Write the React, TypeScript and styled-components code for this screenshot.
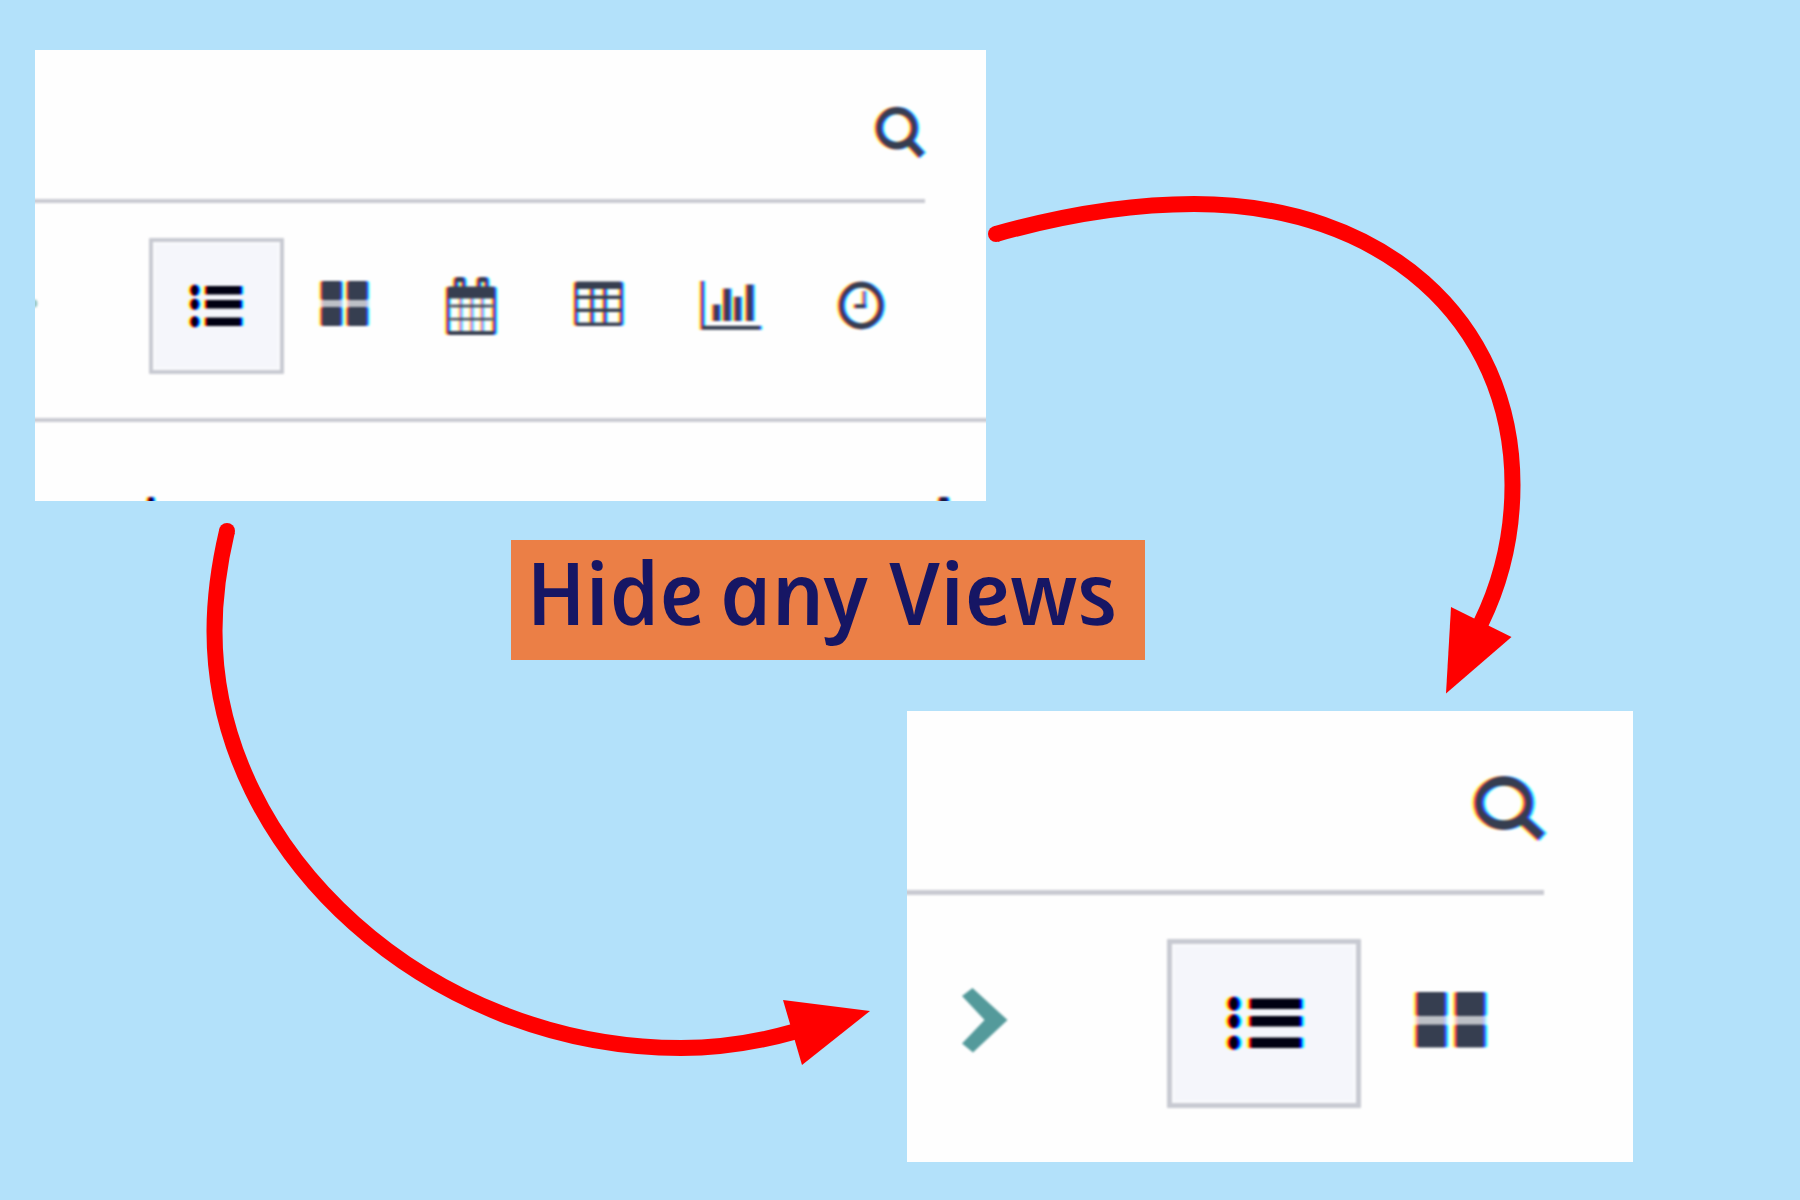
import React from "react";
import styled, { createGlobalStyle } from "styled-components";

const Global = createGlobalStyle`
  html, body { margin: 0; padding: 0; background: #b3e1fa; }
`;

const Canvas = styled.main`
  position: relative;
  box-sizing: border-box;
  width: 1800px;
  height: 1200px;
  padding-top: 50px;
  overflow: hidden;
  background: #b3e1fa;
  display: flex;
  flex-direction: column;
  align-items: flex-start;
`;

const Panel = styled.section<{ $w: number; $left: number; $top?: number }>`
  width: ${(p) => p.$w}px;
  height: 451px;
  margin-left: ${(p) => p.$left}px;
  margin-top: ${(p) => p.$top ?? 0}px;
  background: #fefefe;
  overflow: hidden;
  display: flex;
  flex-direction: column;
  flex: none;
`;

const SearchRow = styled.div<{ $h: number; $right: number }>`
  box-sizing: border-box;
  height: ${(p) => p.$h}px;
  margin-right: ${(p) => p.$right}px;
  display: flex;
  justify-content: flex-end;
  flex: none;
`;

const Rule = styled.div<{ $h: number; $right?: number }>`
  height: ${(p) => p.$h}px;
  margin-right: ${(p) => p.$right ?? 0}px;
  margin-left: -4px;
  background: #c9cad2;
  filter: blur(0.9px);
  flex: none;
`;

const ViewRow = styled.div<{ $h: number; $pad: number }>`
  box-sizing: border-box;
  height: ${(p) => p.$h}px;
  padding-top: ${(p) => p.$pad}px;
  display: flex;
  align-items: flex-start;
  flex: none;
`;

const ActiveView = styled.div<{ $w: number; $h: number; $b: number; $left: number }>`
  box-sizing: border-box;
  width: ${(p) => p.$w}px;
  height: ${(p) => p.$h}px;
  margin-left: ${(p) => p.$left}px;
  flex: none;
  border-radius: 1px;
  background: #f5f6fb;
  box-shadow: inset 0 0 0 ${(p) => p.$b}px #c8cad2, inset 0 0 2px ${(p) => p.$b + 2}px #fafbfd;
  filter: blur(0.8px);
`;

const ActiveSlot = styled.div<{ $w: number }>`
  display: grid;
  flex: none;
  width: ${(p) => p.$w}px;
  > * { grid-area: 1 / 1; }
`;

const Glyph = styled.svg<{ $l?: number; $t?: number }>`
  display: block;
  flex: none;
  overflow: visible;
  isolation: isolate;
  margin-left: ${(p) => p.$l ?? 0}px;
  margin-top: ${(p) => p.$t ?? 0}px;
  filter: blur(1.05px);
  g { mix-blend-mode: multiply; }
`;

const Title = styled.h1`
  box-sizing: border-box;
  margin: 39px 0 0 511px;
  width: 634px;
  height: 120px;
  padding-left: 20px;
  background: #eb7f46;
  color: #161664;
  font: italic 600 87px/102px "Open Sans", "Noto Sans", sans-serif;
  display: flex;
  white-space: nowrap;
  flex: none;
`;

const Word = styled.span<{ $w: number; $sx: number }>`
  display: block;
  width: ${(p) => p.$w}px;
  height: 102px;
  transform: skewX(12deg) scaleX(${(p) => p.$sx});
  transform-origin: 0 83px;
`;

const Arrows = styled.svg`
  position: absolute;
  inset: 0;
  pointer-events: none;
`;

type Box = { x: number; y: number; w: number; h: number };
type IconProps = {
  box: Box;
  ink?: [number, number, number];
  shift?: number;
  l?: number;
  t?: number;
  children: React.ReactNode;
};

/* Paints the shape once per colour channel with a small horizontal offset. */
function Icon({ box, ink = [54, 62, 80], shift = 1.8, l, t, children }: IconProps) {
  const [r, g, b] = ink;
  const layers: [string, number][] = [
    [`rgb(255,255,${b})`, -shift],
    [`rgb(255,${g},255)`, 0],
    [`rgb(${r},255,255)`, shift],
  ];
  return (
    <Glyph
      width={box.w}
      height={box.h}
      viewBox={`${box.x} ${box.y} ${box.w} ${box.h}`}
      $l={l}
      $t={t}
    >
      {layers.map(([color, dx], i) => (
        <g key={i} color={color} fill={color} transform={`translate(${dx} 0)`}>
          {children}
        </g>
      ))}
    </Glyph>
  );
}

const BLACK: [number, number, number] = [0, 0, 18];

export default function App() {
  return (
    <>
      <Global />
      <Canvas>
        <Panel $w={951} $left={35}>
          <SearchRow $h={149} $right={61}>
            <Icon box={{ x: 873, y: 104, w: 52, h: 58 }} t={54}>
              <circle cx="896.6" cy="128.1" r="17.6" fill="none" stroke="currentColor" strokeWidth="7.6" />
              <path d="M908 140.5L921.8 155.3" stroke="currentColor" strokeWidth="8.4" />
            </Icon>
          </SearchRow>
          <Rule $h={4} $right={61} />
          <ViewRow $h={215} $pad={35}>
            <Icon box={{ x: 35, y: 298, w: 4, h: 12 }} t={60} ink={[150, 200, 200]} shift={0}>
              <ellipse cx="34.5" cy="303.5" rx="3" ry="4" />
            </Icon>
            <ActiveSlot $w={245}>
              <ActiveView $w={135} $h={136} $b={4} $left={110} />
              <Icon box={{ x: 186, y: 280, w: 60, h: 50 }} ink={BLACK} l={147} t={42}>
                {[290.3, 304.3, 321.7].map((y) => (
                  <React.Fragment key={y}>
                    <ellipse cx="194.5" cy={y} rx="4.7" ry="5.7" />
                    <rect x="205" y={y - 4.2} width="37" height="8.4" rx="1" />
                  </React.Fragment>
                ))}
              </Icon>
            </ActiveSlot>
            <Icon box={{ x: 318, y: 278, w: 54, h: 50 }} l={34} t={40}>
              <rect x="320.5" y="281" width="21.5" height="19" rx="2" />
              <rect x="346.5" y="281" width="21.5" height="19" rx="2" />
              <rect x="320.5" y="307" width="21.5" height="19" rx="2" />
              <rect x="346.5" y="307" width="21.5" height="19" rx="2" />
              <rect x="321" y="300" width="21" height="7" opacity=".33" />
              <rect x="347" y="300" width="21" height="7" opacity=".33" />
            </Icon>
            <Icon box={{ x: 443, y: 276, w: 56, h: 62 }} l={71} t={38}>
              <path
                fillRule="evenodd"
                d="M449 286.5H493Q496 286.5 496 289.5V332Q496 335 493 335H449Q446 335 446 332V289.5Q446 286.5 449 286.5ZM449.5 298.5V331H492.5V298.5Z"
              />
              <path
                fillRule="evenodd"
                d="M457 277H462Q465.5 277 465.5 281V293H453.5V281Q453.5 277 457 277ZM457.8 282V291.5H461.4V282Z"
              />
              <path
                fillRule="evenodd"
                d="M480 277H485Q488.5 277 488.5 281V293H476.5V281Q476.5 277 480 277ZM480.8 282V291.5H484.4V282Z"
              />
              <path d="M450 306H492M450 319.2H492" stroke="currentColor" strokeWidth="2.8" opacity=".85" />
              <path d="M460.5 298V332M471.5 298V332M482 298V332" stroke="currentColor" strokeWidth="2.4" opacity=".7" />
            </Icon>
            <Icon box={{ x: 571, y: 279, w: 56, h: 50 }} l={72} t={41}>
              <path
                fillRule="evenodd"
                d="M577 281.5H620Q623 281.5 623 284.5V323Q623 326 620 326H577Q574 326 574 323V284.5Q574 281.5 577 281.5ZM577.5 289V322.5H619.5V289Z"
              />
              <path d="M577 297.3H620M577 310.3H620" stroke="currentColor" strokeWidth="3.6" />
              <path d="M591.7 288V323M604.7 288V323" stroke="currentColor" strokeWidth="3.6" />
            </Icon>
            <Icon box={{ x: 698, y: 278, w: 68, h: 54 }} l={71} t={40}>
              <path d="M700.5 281H704V325.8H761V329.7H700.5Z" />
              <rect x="712.5" y="304.5" width="7.5" height="16.5" />
              <rect x="723" y="288.5" width="7.8" height="32.5" />
              <rect x="734" y="296.7" width="7.2" height="24.3" />
              <rect x="745.8" y="284.5" width="7.8" height="36.5" />
            </Icon>
            <Icon box={{ x: 835, y: 279, w: 52, h: 54 }} l={69} t={41}>
              <ellipse cx="861" cy="305.5" rx="19.8" ry="20.8" fill="none" stroke="currentColor" strokeWidth="6.2" />
              <path d="M864 291V306" stroke="currentColor" strokeWidth="3.8" opacity=".75" />
              <path d="M854 306.2H866" stroke="currentColor" strokeWidth="4" />
            </Icon>
          </ViewRow>
          <Rule $h={4} $right={-4} />
          <ViewRow $h={79} $pad={74}>
            <Icon box={{ x: 145, y: 496, w: 12, h: 6 }} l={110} ink={BLACK}>
              <rect x="147.5" y="497" width="6.5" height="10" rx="2" />
            </Icon>
            <Icon box={{ x: 936, y: 496, w: 15, h: 6 }} l={779} ink={[20, 28, 60]}>
              <rect x="938.5" y="497" width="10" height="10" rx="2" />
            </Icon>
          </ViewRow>
        </Panel>

        <Title>
          <Word $w={193} $sx={0.985}>Hide</Word>
          <Word $w={170} $sx={1.03}>any</Word>
          <Word $w={222} $sx={1.018}>Views</Word>
        </Title>

        <Panel $w={726} $left={907} $top={51}>
          <SearchRow $h={179} $right={87}>
            <Icon box={{ x: 1470, y: 774, w: 76, h: 70 }} t={63} shift={2.3}>
              <ellipse cx="1503.5" cy="803" rx="24.9" ry="22.2" fill="none" stroke="currentColor" strokeWidth="9.8" />
              <path d="M1521 818L1541.5 837" stroke="currentColor" strokeWidth="10.6" />
            </Icon>
          </SearchRow>
          <Rule $h={5} $right={89} />
          <ViewRow $h={267} $pad={44}>
            <Icon box={{ x: 960, y: 986, w: 50, h: 70 }} l={53} t={47} ink={[84, 154, 155]} shift={0}>
              <path d="M962 996L972.5 988L1007.5 1020L973 1052.5L962 1043.5L984.5 1020Z" />
            </Icon>
            <ActiveSlot $w={351}>
              <ActiveView $w={194} $h={169} $b={5} $left={157} />
              <Icon box={{ x: 1222, y: 990, w: 86, h: 66 }} l={212} t={51} ink={BLACK} shift={2.4}>
                {[1003.7, 1021.3, 1042.7].map((y) => (
                  <React.Fragment key={y}>
                    <ellipse cx="1233.7" cy={y} rx="6.2" ry="7.2" />
                    <rect x="1249" y={y - 5.2} width="53" height="10.4" rx="1.5" />
                  </React.Fragment>
                ))}
              </Icon>
            </ActiveSlot>
            <Icon box={{ x: 1411, y: 988, w: 78, h: 62 }} l={50} t={49} shift={2.3}>
              <rect x="1415.5" y="992" width="31" height="24" rx="2" />
              <rect x="1454.5" y="992" width="31" height="24" rx="2" />
              <rect x="1415.5" y="1024.5" width="31" height="23" rx="2" />
              <rect x="1454.5" y="1024.5" width="31" height="23" rx="2" />
              <rect x="1416" y="1016" width="30" height="8.5" opacity=".33" />
              <rect x="1455" y="1016" width="30" height="8.5" opacity=".33" />
            </Icon>
          </ViewRow>
        </Panel>

        <Arrows width="1800" height="1200" viewBox="0 0 1800 1200">
          <g fill="none" stroke="#ff0000" strokeWidth="16">
            <path d="M996 234C1062 215.5 1132 204 1194 204C1382 204 1512.5 319 1512.5 485C1512.5 535 1502 580 1481 623" />
            <path d="M227 531C219 565 214.5 598 214.5 631C214.5 854 431 1048 681 1048C722 1048 758 1042 795 1031.5" />
          </g>
          <g fill="#ff0000">
            <circle cx="996" cy="234" r="8" />
            <circle cx="227" cy="531" r="8" />
            <path d="M1451 607L1511.5 637L1446 693.5Z" />
            <path d="M783 1000L870 1011L802 1065Z" />
          </g>
        </Arrows>
      </Canvas>
    </>
  );
}
